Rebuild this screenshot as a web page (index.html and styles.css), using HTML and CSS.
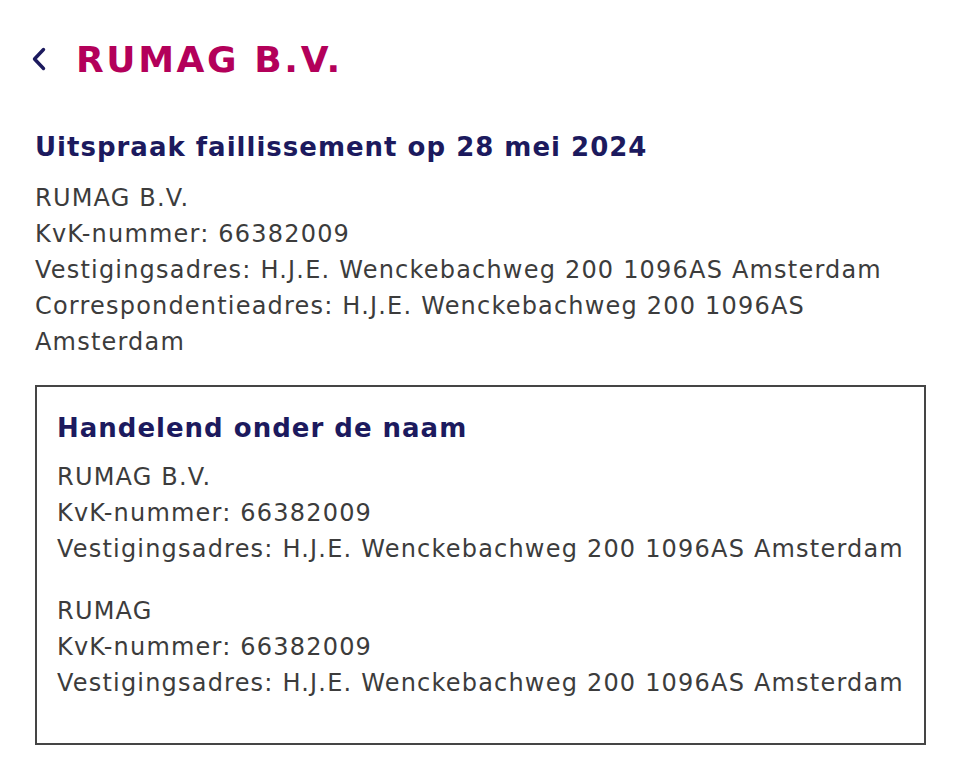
FILE: index.html
```html
<!DOCTYPE html>
<html lang="nl">
<head>
<meta charset="utf-8">
<title>RUMAG B.V.</title>
<link rel="stylesheet" href="styles.css">
</head>
<body>
<main class="page">
  <header class="title-row">
    <a class="back" href="#" aria-label="Terug">
      <svg width="16" height="26" viewBox="0 0 16 26" aria-hidden="true"><path d="M13.5 3.5 L4.5 13 L13.5 22.5" fill="none" stroke="#1c1a5e" stroke-width="3.4" stroke-linecap="round" stroke-linejoin="round"/></svg>
    </a>
    <h1 class="title">RUMAG B.V.</h1>
  </header>

  <h2 class="subtitle">Uitspraak faillissement op 28 mei 2024</h2>
  <div class="details">
    <div>RUMAG B.V.</div>
    <div>KvK-nummer: 66382009</div>
    <div>Vestigingsadres: H.J.E. Wenckebachweg 200 1096AS Amsterdam</div>
    <div>Correspondentieadres: H.J.E. Wenckebachweg 200 1096AS Amsterdam</div>
  </div>

  <section class="box">
    <h3 class="box-title">Handelend onder de naam</h3>
    <div class="details">
      <div>RUMAG B.V.</div>
      <div>KvK-nummer: 66382009</div>
      <div>Vestigingsadres: H.J.E. Wenckebachweg 200 1096AS Amsterdam</div>
    </div>
    <div class="details gap">
      <div>RUMAG</div>
      <div>KvK-nummer: 66382009</div>
      <div>Vestigingsadres: H.J.E. Wenckebachweg 200 1096AS Amsterdam</div>
    </div>
  </section>
</main>
</body>
</html>
```

FILE: styles.css
```css
html, body {
  margin: 0;
  padding: 0;
  background: #ffffff;
}

.page {
  margin: 0 33px 0 35px;
  padding-top: 38px;
  font-family: "DejaVu Sans", Verdana, sans-serif;
  color: #3c3c3c;
}

.title-row {
  display: flex;
  align-items: center;
  gap: 30px;
}

.back {
  display: flex;
  align-items: center;
  margin-left: -5px;
  margin-top: -3px;
}

.title {
  margin: 0;
  font-size: 36px;
  line-height: 44px;
  font-weight: bold;
  letter-spacing: 2.6px;
  color: #b3005a;
}

.subtitle {
  margin: 49px 0 17px;
  font-size: 26px;
  line-height: 32px;
  font-weight: bold;
  letter-spacing: 1px;
  color: #1c1a5e;
}

.details {
  font-size: 24px;
  line-height: 36px;
  letter-spacing: 1.2px;
}

.box {
  margin-top: 25px;
  border: 2px solid #454545;
  padding: 25px 20px 42px 20px;
}

.box-title {
  margin: 0 0 15px;
  font-size: 26px;
  line-height: 32px;
  font-weight: bold;
  letter-spacing: 1px;
  color: #1c1a5e;
}

.details.gap {
  margin-top: 26px;
}
```
